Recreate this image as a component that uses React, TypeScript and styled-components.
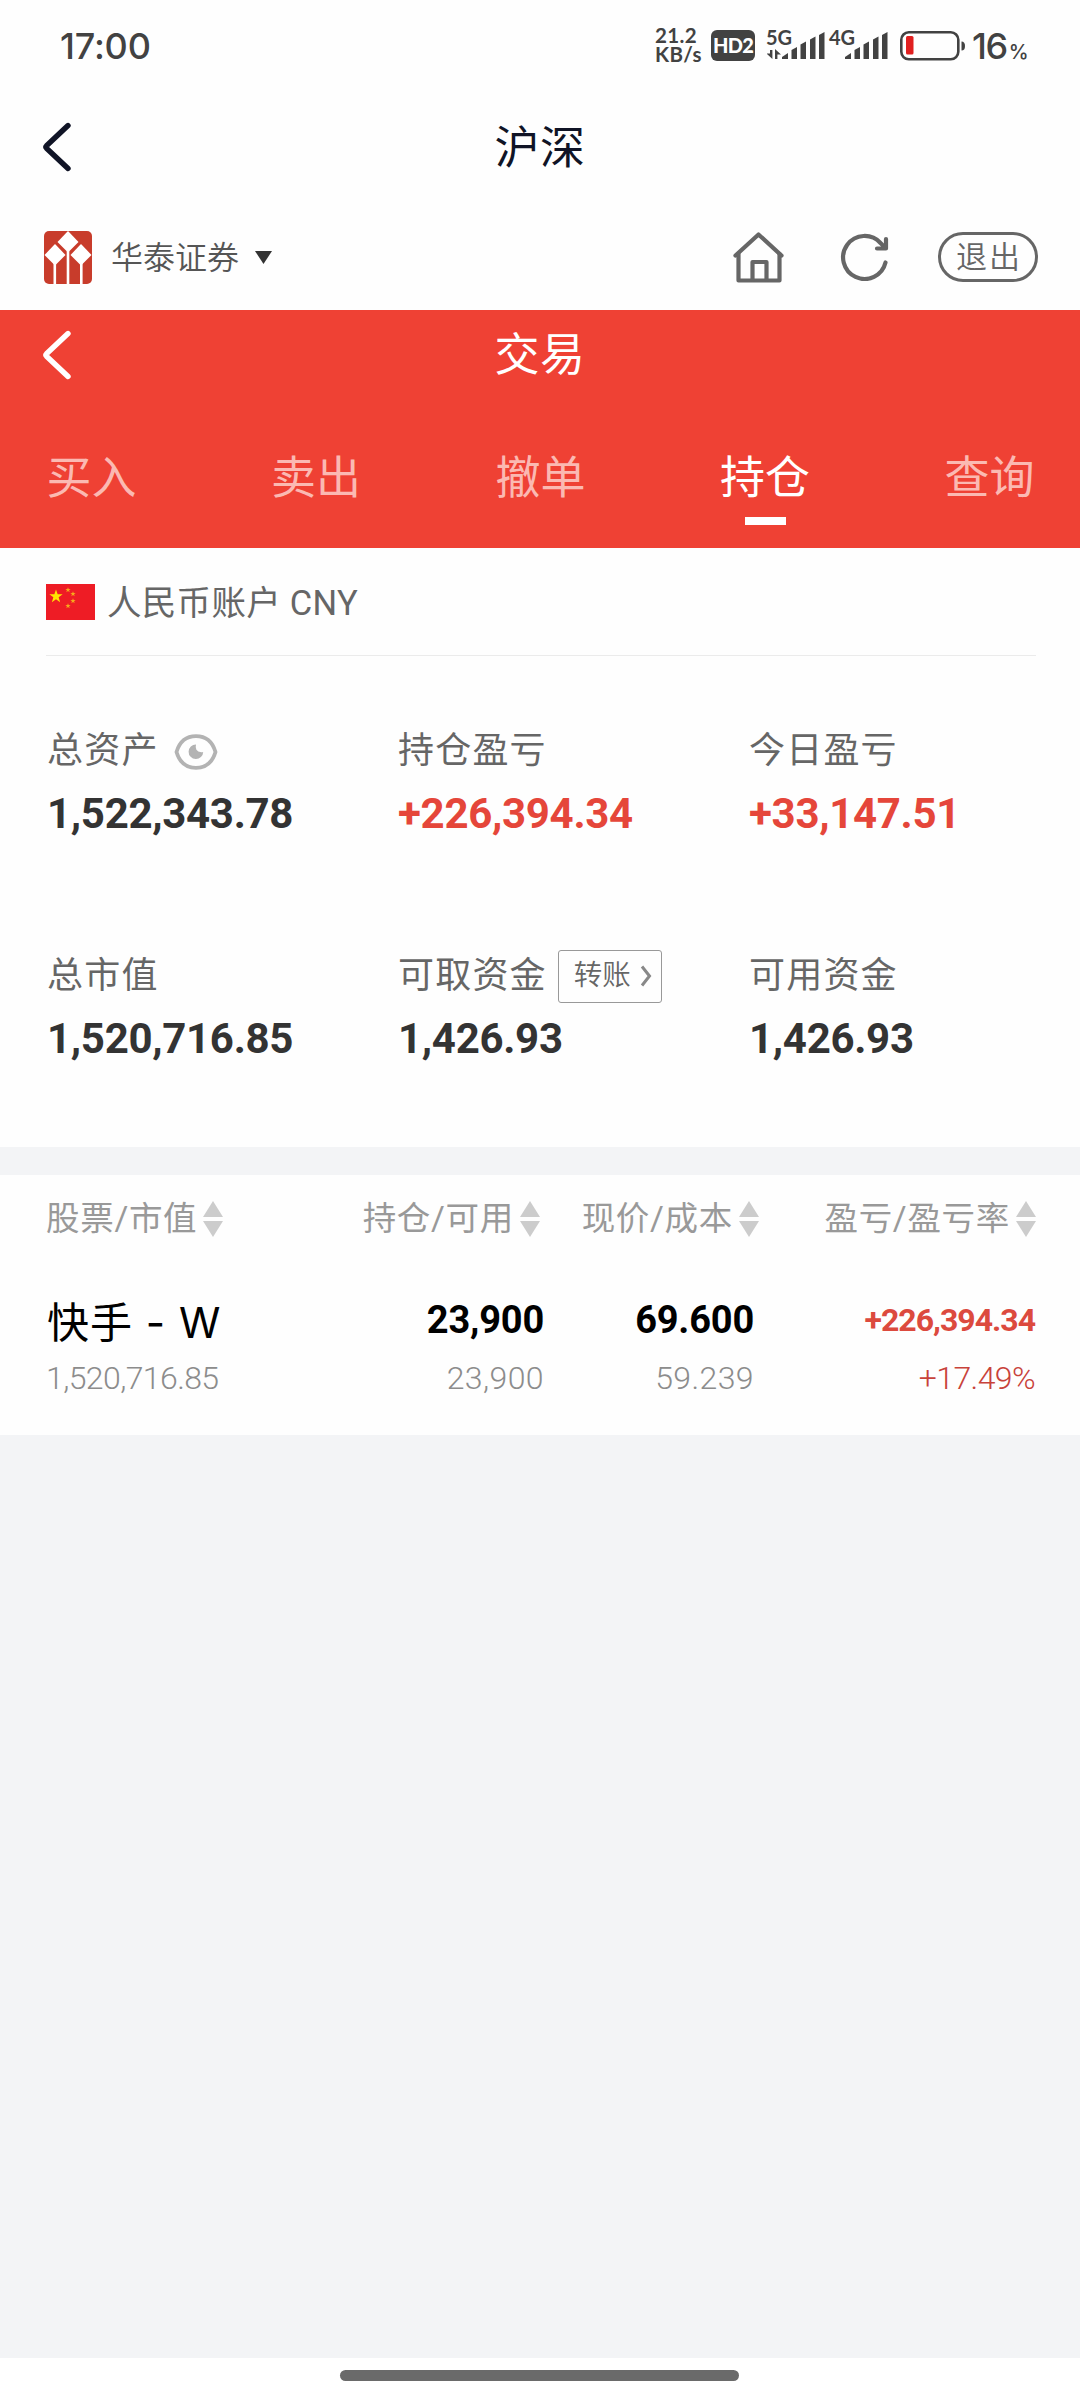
import React from 'react';
import styled, { createGlobalStyle } from 'styled-components';

const Global = createGlobalStyle`
  * { box-sizing: border-box; }
  body { margin: 0; background: #fff; font-family: Roboto, "Noto Sans CJK SC", sans-serif; }
  svg { display: block; flex: none; }
`;

const Screen = styled.div`
  width: 1080px;
  height: 2400px;
  display: flex;
  flex-direction: column;
  background: #fefefe;
  overflow: hidden;
  white-space: nowrap;
`;

const StatusBar = styled.div`
  height: 90px;
  flex: none;
  display: flex;
  align-items: flex-start;
  padding: 28px 40px 0 60px;
  color: #424242;
  font-family: Inter, sans-serif;
`;
const Clock = styled.div`
  width: 595px;
  font-size: 36px;
  line-height: 36px;
  font-weight: 500;
  letter-spacing: -0.2px;
`;
const Speed = styled.div`
  width: 56px;
  display: flex;
  flex-direction: column;
  font-family: Lato, sans-serif;
  font-size: 20.5px;
  line-height: 19px;
  font-weight: 700;
  letter-spacing: 0.4px;
  margin-top: -2px;
`;
const HdBadge = styled.div`
  width: 44px;
  height: 31px;
  margin: 2px 12px 0 0;
  border-radius: 6px;
  background: #424242;
  color: #fff;
  font-family: Lato, sans-serif;
  font-weight: 900;
  font-size: 20px;
  line-height: 31px;
  letter-spacing: -0.8px;
  text-align: center;
`;
const Signal = styled.div<{ $w: number }>`
  width: ${p => p.$w}px;
  height: 32px;
  position: relative;
`;
const NetLabel = styled.span`
  position: absolute;
  left: -1px;
  top: 0;
  font-family: Lato, sans-serif;
  font-size: 20px;
  line-height: 18px;
  font-weight: 700;
`;
const BatteryWrap = styled.div`
  padding-top: 3px;
`;
const BatteryPct = styled.div`
  margin-left: 6px;
  font-size: 36px;
  line-height: 36px;
  font-weight: 500;
  letter-spacing: -1.5px;
`;
const PctSign = styled.span`
  font-size: 20px;
  font-weight: 500;
  margin-left: 2px;
`;

const Bar = styled.div<{ $h: number; $color: string }>`
  height: ${p => p.$h}px;
  flex: none;
  display: grid;
  grid-template-columns: 1fr auto 1fr;
  align-items: center;
  padding: 0 42px;
  color: ${p => p.$color};
`;
const Title = styled.h1<{ $drop: number }>`
  margin: 0;
  padding-top: ${p => p.$drop}px;
  font-size: 45px;
  line-height: 60px;
  font-weight: 400;
  letter-spacing: 0.6px;
`;

const BrokerRow = styled.div`
  height: 107px;
  flex: none;
  display: flex;
  align-items: center;
  padding: 1px 42px 0 44px;
  color: #555;
`;
const BrokerName = styled.span`
  margin: 1px 16px 0 19px;
  font-size: 32px;
  line-height: 44px;
  font-weight: 350;
  flex: none;
`;
const Tools = styled.div`
  margin-left: auto;
  display: flex;
  align-items: center;
`;
const Spacer = styled.span`
  width: 56px;
`;
const Logout = styled.button`
  width: 100px;
  height: 50px;
  margin-left: 48px;
  padding: 2px 0 0 2px;
  border: 3px solid #666;
  border-radius: 25px;
  background: none;
  color: #666;
  font: 350 31px/40px Roboto, "Noto Sans CJK SC", sans-serif;
  letter-spacing: 2px;
`;

const RedPanel = styled.div`
  height: 238px;
  flex: none;
  background: #ef4134;
`;
const Tabs = styled.nav`
  display: flex;
  justify-content: space-between;
  padding: 49px 45px 0 46px;
`;
const Tab = styled.div<{ $active?: boolean }>`
  width: 91px;
  display: flex;
  flex-direction: column;
  align-items: center;
  gap: 8px;
  font-size: 45px;
  line-height: 60px;
  font-weight: 400;
  color: ${p => (p.$active ? '#fff' : '#fbb9b2')};
`;
const Underline = styled.i`
  width: 41px;
  height: 8px;
  background: #fff;
`;

const Account = styled.div`
  height: 108px;
  flex: none;
  margin: 0 44px 0 46px;
  display: flex;
  align-items: center;
  gap: 12px;
  border-bottom: 1px solid #ebebeb;
  color: #666;
  font-size: 34.5px;
  font-weight: 400;
  letter-spacing: 0.3px;
`;
const AccountName = styled.span`
  padding-top: 2px;
  line-height: 44px;
`;

const Summary = styled.div`
  height: 491px;
  flex: none;
  padding: 69px 0 0 47px;
  display: grid;
  grid-template-columns: repeat(3, 351px);
  grid-template-rows: 225px 225px;
`;
const Label = styled.div`
  height: 52px;
  display: flex;
  align-items: center;
  font-size: 36px;
  font-weight: 400;
  letter-spacing: 1.2px;
  line-height: 52px;
  color: #666;
`;
const Figure = styled.div<{ $up?: boolean }>`
  margin-top: 12px;
  font-size: 42px;
  line-height: 50px;
  font-weight: 700;
  letter-spacing: -0.3px;
  color: ${p => (p.$up ? '#e5463a' : '#333')};
`;
const EyeWrap = styled.span`
  margin: 1px 0 0 15px;
`;
const Transfer = styled.button`
  width: 104px;
  height: 53px;
  margin: 0 0 0 11px;
  padding: 0 9px 0 15px;
  display: flex;
  align-items: center;
  justify-content: space-between;
  border: 1.5px solid #999;
  border-radius: 3px;
  background: none;
  color: #666;
  font: 350 28.500px/40px Roboto, "Noto Sans CJK SC", sans-serif;
`;

const Band = styled.div`
  height: 28px;
  flex: none;
  background: #f3f4f6;
`;
const Positions = styled.div`
  height: 260px;
  flex: none;
  padding: 0 44px 0 46px;
`;
const HeadRow = styled.div`
  height: 86px;
  display: grid;
  grid-template-columns: 200px 294px 219px 277px;
  align-items: center;
`;
const HeadCell = styled.div<{ $left?: boolean }>`
  display: flex;
  align-items: center;
  justify-content: ${p => (p.$left ? 'flex-start' : 'flex-end')};
  gap: 6px;
  padding-top: 1px;
  font-size: 33.5px;
  line-height: 44px;
  font-weight: 400;
  letter-spacing: 0.7px;
  color: #999;
`;
const BodyRow = styled.div`
  padding-top: 31px;
  display: grid;
  grid-template-columns: 200px 298px 210px 281px;
`;
const Cell = styled.div<{ $left?: boolean }>`
  display: flex;
  flex-direction: column;
  align-items: ${p => (p.$left ? 'flex-start' : 'flex-end')};
`;
const StockName = styled.div`
  height: 58px;
  padding: 3px 0 0 1px;
  font-family: Inter, "Noto Sans CJK SC", sans-serif;
  font-size: 42px;
  line-height: 56px;
  font-weight: 400;
  letter-spacing: 1px;
  color: #000;
`;
const Main = styled.div<{ $up?: boolean }>`
  height: 58px;
  line-height: 56px;
  font-size: ${p => (p.$up ? 32 : 38)}px;
  font-weight: 700;
  letter-spacing: ${p => (p.$up ? -1 : -0.2)}px;
  color: ${p => (p.$up ? '#dc4a3e' : '#000')};
`;
const Sub = styled.div<{ $up?: boolean; $spacing: number }>`
  height: 56px;
  line-height: 56px;
  font-size: 32px;
  font-weight: 300;
  letter-spacing: ${p => p.$spacing}px;
  color: ${p => (p.$up ? '#c8423a' : '#8c8c8c')};
`;
const Rest = styled.div`
  flex: 1;
  background: #f3f4f6;
`;
const NavArea = styled.div`
  height: 42px;
  flex: none;
  background: #fff;
  display: flex;
  justify-content: center;
  padding: 12px 1px 0 0;
`;
const NavPill = styled.div`
  width: 399px;
  height: 11px;
  border-radius: 6px;
  background: #6a6a6a;
`;

const Back = () => (
  <svg width="30" height="52" viewBox="0 0 30 52" fill="none" stroke="currentColor" strokeWidth="5.4" strokeLinecap="round" strokeLinejoin="round">
    <path d="M26 4.500 4.500 24.800Q3.300 26 4.500 27.200L26 47.500" />
  </svg>
);

const Bars = ({ x, arrows }: { x: number; arrows?: boolean }) => (
  <svg width={x + 44} height="32" viewBox={`0 0 ${x + 44} 32`} fill="#424242">
    {arrows && <path d="M3 22h2.400v9L-.5 25.600H3zM8 31h2.400v-4.600H14L8 21z" />}
    <path d={`M${x} 31v-2l6-4v6z`} />
    <path d={`M${x + 9.5} 31v-9l5.500-3v12z`} />
    <path d={`M${x + 18.5} 31V16.500l5.500-3V31z`} />
    <path d={`M${x + 28} 31V11.500l5.500-3V31z`} />
    <path d={`M${x + 37} 31V7l5.500-3V31z`} />
  </svg>
);

const Battery = () => (
  <svg width="66" height="30" viewBox="0 0 66 30">
    <rect x="1.300" y="1.300" width="57" height="27" rx="7.500" fill="none" stroke="#424242" strokeWidth="2.600" />
    <rect x="6" y="5" width="7.500" height="18.500" rx="1.500" fill="#e01f1f" />
    <path d="M61.500 10.500q3.500 0 3.500 4.500t-3.500 4.500z" fill="#424242" />
  </svg>
);

const Logo = () => (
  <svg width="48" height="53" viewBox="0 0 48 53">
    <rect width="48" height="53" rx="5" fill="#c83c2b" />
    <g fill="#fff">
      <path d="M24 0 34.500 11 24 21.500 13.500 11z" />
      <path d="M11 13 21.500 24 11 34.500.500 24z" />
      <path d="M37 13 47.500 24 37 34.500 26.500 24z" />
      <rect x="9.500" y="32" width="2.600" height="21" />
      <rect x="22.700" y="20" width="2.600" height="33" />
      <rect x="36" y="32" width="2.600" height="21" />
    </g>
  </svg>
);

const Home = () => (
  <svg width="52" height="51" viewBox="0 0 52 51" fill="none" stroke="#666" strokeWidth="4.200" strokeLinecap="round" strokeLinejoin="round">
    <path d="M3.500 23.500 26.500 2.500 49.500 23.500" />
    <path d="M6.500 22v26.500h41V22" />
    <path d="M20.500 48V30h14V48" />
  </svg>
);

const Refresh = () => (
  <svg width="50" height="48" viewBox="0 0 50 48" fill="none" stroke="#666" strokeWidth="4.200" strokeLinecap="round" strokeLinejoin="round">
    <path d="M45.500 29.500A21.500 21.500 0 1 1 40.500 10L44.500 14" />
    <path d="M46 6v9.500H37" />
    <path d="M46 9.500v6h-6z" fill="#666" strokeWidth="1" />
  </svg>
);

const starPath = (cx: number, cy: number, r: number) =>
  Array.from({ length: 10 }, (_, i) => {
    const a = (Math.PI * i) / 5 - Math.PI / 2;
    const q = i % 2 ? r * 0.4 : r;
    return `${(cx + q * Math.cos(a)).toFixed(2)},${(cy + q * Math.sin(a)).toFixed(2)}`;
  }).join(' ');

const Flag = () => (
  <svg width="49" height="36" viewBox="0 0 49 36">
    <rect width="49" height="36" fill="#ee1c25" />
    <polygon points={starPath(10, 12.5, 7)} fill="#ffe600" />
    <g fill="#f7a81b">
      <polygon points={starPath(22, 6, 2.8)} />
      <polygon points={starPath(27, 10, 2.8)} />
      <polygon points={starPath(27, 17, 2.8)} />
      <polygon points={starPath(22, 22, 2.8)} />
    </g>
  </svg>
);

const Eye = () => (
  <svg width="44" height="36" viewBox="0 0 44 36">
    <path d="M2.500 18C5.500 8 12.500 2.200 22 2.200S38.500 8 41.500 18C38.500 28 31.500 33.800 22 33.800S5.500 28 2.500 18z" fill="none" stroke="#b3b3b3" strokeWidth="3.800" strokeLinejoin="round" />
    <path d="M22 10.500a7.300 7.300 0 1 0 7.200 7.500q-5 .8-6.800-2.200-1.200-2.500-.4-5.300z" fill="#b3b3b3" />
  </svg>
);

const SortIcon = () => (
  <svg width="20" height="36" viewBox="0 0 20 36" fill="#ccc">
    <path d="M10 0 20 16H0zM0 20h20L10 36z" />
  </svg>
);

const totals = [
  { label: '总资产', value: '1,522,343.78', eye: true },
  { label: '持仓盈亏', value: '+226,394.34', up: true },
  { label: '今日盈亏', value: '+33,147.51', up: true },
  { label: '总市值', value: '1,520,716.85' },
  { label: '可取资金', value: '1,426.93', transfer: true },
  { label: '可用资金', value: '1,426.93' },
];
const tabs = ['买入', '卖出', '撤单', '持仓', '查询'];
const heads = ['股票/市值', '持仓/可用', '现价/成本', '盈亏/盈亏率'];

export default function App() {
  return (
    <Screen>
      <Global />
      <StatusBar>
        <Clock>17:00</Clock>
        <Speed><span>21.2</span><span>KB/s</span></Speed>
        <HdBadge>HD2</HdBadge>
        <Signal $w={63}><NetLabel>5G</NetLabel><Bars x={15} arrows /></Signal>
        <Signal $w={70}><NetLabel>4G</NetLabel><Bars x={15} /></Signal>
        <BatteryWrap><Battery /></BatteryWrap>
        <BatteryPct>16<PctSign>%</PctSign></BatteryPct>
      </StatusBar>
      <Bar $h={113} $color="#101426"><Back /><Title $drop={4}>沪深</Title></Bar>
      <BrokerRow>
        <Logo />
        <BrokerName>华泰证券</BrokerName>
        <svg width="17" height="13" viewBox="0 0 17 13"><path d="M0 0h17L8.500 13z" fill="#333" /></svg>
        <Tools>
          <Home />
          <Spacer />
          <Refresh />
          <Logout>退出</Logout>
        </Tools>
      </BrokerRow>
      <RedPanel>
        <Bar $h={90} $color="#fff"><Back /><Title $drop={1}>交易</Title></Bar>
        <Tabs>
          {tabs.map(t => (
            <Tab key={t} $active={t === '持仓'}>
              {t}
              {t === '持仓' && <Underline />}
            </Tab>
          ))}
        </Tabs>
      </RedPanel>
      <Account><Flag /><AccountName>人民币账户 CNY</AccountName></Account>
      <Summary>
        {totals.map(t => (
          <div key={t.label}>
            <Label>
              {t.label}
              {t.eye && <EyeWrap><Eye /></EyeWrap>}
              {t.transfer && (
                <Transfer>
                  转账
                  <svg width="12" height="22" viewBox="0 0 12 22" fill="none" stroke="#888" strokeWidth="3"><path d="M2 1.500 9.500 11 2 20.500" /></svg>
                </Transfer>
              )}
            </Label>
            <Figure $up={t.up}>{t.value}</Figure>
          </div>
        ))}
      </Summary>
      <Band />
      <Positions>
        <HeadRow>
          {heads.map((h, i) => (
            <HeadCell key={h} $left={i === 0}>{h}<SortIcon /></HeadCell>
          ))}
        </HeadRow>
        <BodyRow>
          <Cell $left><StockName>快手 - W</StockName><Sub $spacing={-0.6}>1,520,716.85</Sub></Cell>
          <Cell><Main>23,900</Main><Sub $spacing={0.4}>23,900</Sub></Cell>
          <Cell><Main>69.600</Main><Sub $spacing={0.4}>59.239</Sub></Cell>
          <Cell><Main $up>+226,394.34</Main><Sub $up $spacing={-0.6}>+17.49%</Sub></Cell>
        </BodyRow>
      </Positions>
      <Rest />
      <NavArea><NavPill /></NavArea>
    </Screen>
  );
}
